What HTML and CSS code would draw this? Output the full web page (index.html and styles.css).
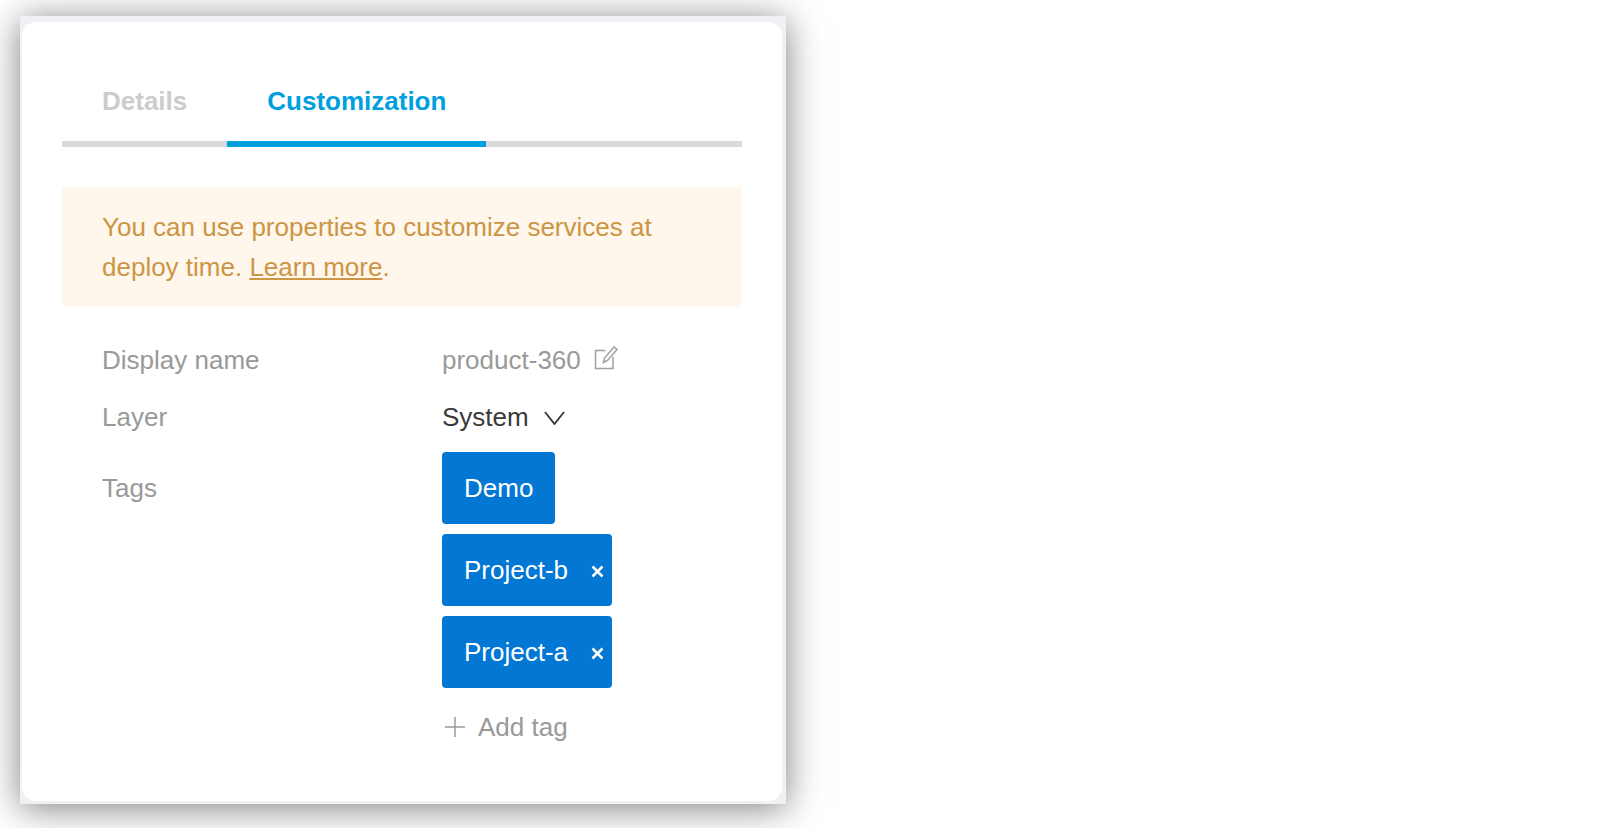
FILE: index.html
```html
<!DOCTYPE html>
<html lang="en">
<head>
	<meta charset="UTF-8">
	<title>Customization</title>
	<link rel="stylesheet" href="styles.css">
</head>
<body>
	<div class="frame">
		<div class="card">
			<div class="tabs">
				<div class="tab">Details</div>
				<div class="tab active">Customization</div>
			</div>
			<div class="notice">You can use properties to customize services at deploy time. <a href="#">Learn more</a>.</div>
			<div class="row name-row">
				<div class="label">Display name</div>
				<div class="value muted">product-360
					<svg class="edit" width="24" height="24" viewBox="0 0 24 24" fill="none" stroke="#a0a0a0" stroke-width="1.5"><path d="M11.500 4.500H1.500V22.500H19V11"/><path d="M9.500 16.500L10.500 12L20 1L23 3.500L13.500 14.500z"/></svg>
				</div>
			</div>
			<div class="row layer-row">
				<div class="label">Layer</div>
				<div class="value">System
					<svg class="chevron" width="21" height="14" viewBox="0 0 21 14" fill="none" stroke="#333" stroke-width="1.8"><path d="M1 1L10.500 13L20 1"/></svg>
				</div>
			</div>
			<div class="row tags-row">
				<div class="label tags-label">Tags</div>
				<div class="tags">
					<div class="tag">Demo</div>
					<div class="tag">Project-b
						<svg class="close" width="13" height="13" viewBox="0 0 13 13" fill="none" stroke="#fff" stroke-width="2.500"><path d="M1.500 1.500l10 10M11.500 1.500l-10 10"/></svg>
					</div>
					<div class="tag">Project-a
						<svg class="close" width="13" height="13" viewBox="0 0 13 13" fill="none" stroke="#fff" stroke-width="2.500"><path d="M1.500 1.500l10 10M11.500 1.500l-10 10"/></svg>
					</div>
					<div class="add">
						<svg class="plus" width="20" height="20" viewBox="0 0 20 20" fill="none" stroke="#999" stroke-width="1.500"><path d="M10 0v20M0 10h20"/></svg>
						Add tag
					</div>
				</div>
			</div>
		</div>
	</div>
</body>
</html>
```

FILE: styles.css
```css
html,body{margin: 0;height: 100%;overflow: hidden;background-color: #fff;}
body{padding: 16px 0 0 20px;box-sizing: border-box;font-family: "Liberation Sans", Arial, sans-serif;font-size: 26px;color: #3a3a3a;}
.frame{width: 766px;height: 788px;padding: 6px 4px 3px 2px;box-sizing: border-box;background-color: #f0f1f4;box-shadow: 0 4px 34px rgba(0,0,0,.5);}
.card{height: 100%;padding: 0 40px;box-sizing: border-box;background-color: #fff;border-radius: 14px;}

.tabs{display: flex;padding-top: 49px;border-bottom: 6px solid #d8d9da;}
.tab{margin-bottom: -6px;padding: 0 40px;height: 70px;line-height: 60px;font-weight: bold;color: #ccc;border-bottom: 6px solid transparent;}
.tab.active{color: #00a0df;border-bottom-color: #00a0df;}

.notice{margin-top: 40px;padding: 20px 40px;line-height: 40px;border-radius: 4px;background-color: #fff6ec;color: #cc9544;}
.notice a{color: inherit;}

.row{display: flex;padding-left: 40px;line-height: 40px;}
.label{width: 340px;color: #999;}
.tags-label{line-height: 72px;}
.name-row{margin-top: 33px;}
.layer-row{margin-top: 17px;}
.tags-row{margin-top: 15px;}
.muted{color: #999;}
.value{display: flex;align-items: center;}
.edit{margin: -4px 0 0 13px;}
.chevron{margin: 2px 0 0 15px;}

.tags{display: flex;flex-direction: column;align-items: flex-start;gap: 10px;}
.tag{display: flex;align-items: center;height: 72px;padding: 0 22px;border-radius: 4px;background-color: #0277d4;color: #fff;}
.close{margin: 2px -14px 0 23px;}
.add{display: flex;align-items: center;margin-top: 9px;color: #999;}
.plus{margin: 0 13px 0 3px;}
```
